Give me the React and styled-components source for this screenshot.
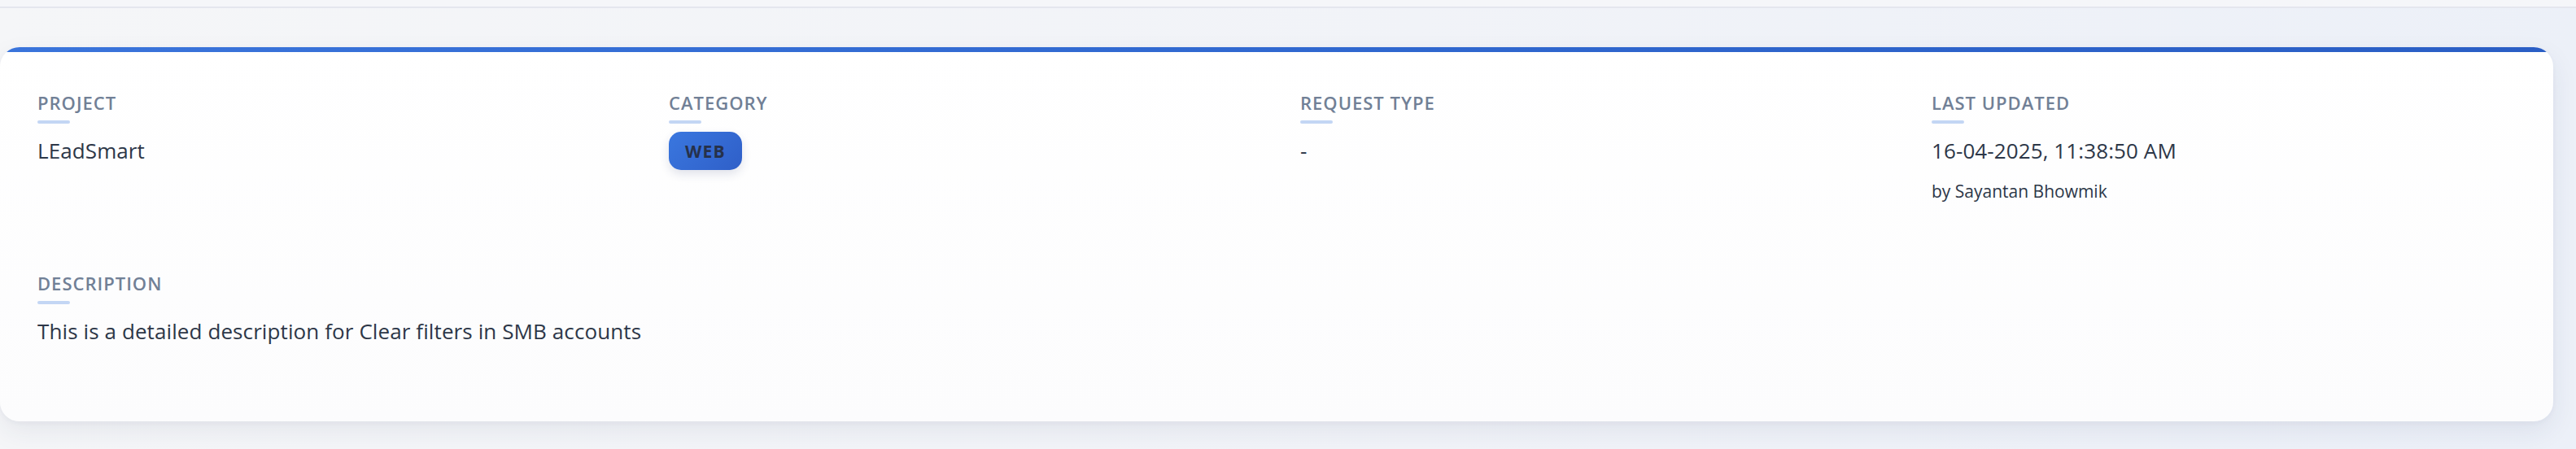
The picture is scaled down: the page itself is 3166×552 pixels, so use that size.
import React from "react";
import styled, { createGlobalStyle } from "styled-components";

const GlobalStyle = createGlobalStyle`
  html, body {
    margin: 0;
    padding: 0;
  }
  body {
    font-family: "Open Sans", "Noto Sans", sans-serif;
    background: #f3f4f8;
    -webkit-font-smoothing: antialiased;
  }
  * { box-sizing: border-box; }
`;

const Page = styled.div`
  min-height: 552px;
  background: linear-gradient(90deg, #f5f6f8 0%, #f1f3f8 55%, #ecf0f8 100%);
`;

const TopStrip = styled.div`
  height: 10px;
  background: #f5f6f9;
  border-bottom: 2px solid #e4e6ee;
`;

const Main = styled.main`
  padding: 48px 28px 34px 0;
`;

const Card = styled.section`
  overflow: hidden;
  border-radius: 24px;
  background: linear-gradient(180deg, #ffffff 0%, #fcfcfd 100%);
  box-shadow: 0 12px 32px rgba(40, 52, 90, 0.08), 0 2px 6px rgba(40, 52, 90, 0.04);
`;

const AccentBar = styled.div`
  height: 6px;
  background: linear-gradient(90deg, #3a74db 0%, #3068d0 50%, #2a5ec5 100%);
`;

const CardBody = styled.div`
  padding: 49px 46px 88px;
`;

const FieldGrid = styled.div`
  display: grid;
  grid-template-columns: repeat(4, 1fr);
  column-gap: 58px;
`;

const Field = styled.div`
  display: flex;
  flex-direction: column;
  align-items: flex-start;
  margin-top: ${(p) => p.$offset || 0}px;
`;

const Label = styled.div`
  font-size: 22px;
  line-height: 26px;
  font-weight: 600;
  letter-spacing: 1px;
  text-transform: uppercase;
  color: #718096;
`;

const Underline = styled.span`
  display: block;
  width: 40px;
  height: 4px;
  margin-top: 9px;
  border-radius: 2px;
  background: #c3d6f4;
`;

const Value = styled.div`
  margin-top: 10px;
  font-size: 26px;
  line-height: 46px;
  font-weight: 400;
  letter-spacing: 0.1px;
  color: #2d3748;
`;

const SubValue = styled.div`
  margin-top: 12px;
  font-size: 21px;
  line-height: 30px;
  color: #2d3748;
`;

const Badge = styled.span`
  margin-top: 10px;
  display: inline-flex;
  align-items: center;
  justify-content: center;
  height: 47px;
  padding: 0 20px;
  border-radius: 15px;
  background: linear-gradient(135deg, #3a77df 0%, #2f5fc8 100%);
  box-shadow: 0 5px 12px rgba(40, 60, 110, 0.14);
  font-size: 21px;
  font-weight: 700;
  letter-spacing: 1.2px;
  color: #26314a;
`;

const fields = [
  { label: "Project", value: "LEadSmart" },
  { label: "Category", badge: "WEB" },
  { label: "Request Type", value: "-" },
  { label: "Last Updated", value: "16-04-2025, 11:38:50 AM", sub: "by Sayantan Bhowmik" },
];

export default function App() {
  return (
    <Page>
      <GlobalStyle />
      <TopStrip />
      <Main>
        <Card>
          <AccentBar />
          <CardBody>
            <FieldGrid>
              {fields.map((f) => (
                <Field key={f.label}>
                  <Label>{f.label}</Label>
                  <Underline />
                  {f.badge ? <Badge>{f.badge}</Badge> : <Value>{f.value}</Value>}
                  {f.sub && <SubValue>{f.sub}</SubValue>}
                </Field>
              ))}
            </FieldGrid>
            <Field $offset={85}>
              <Label>Description</Label>
              <Underline />
              <Value>This is a detailed description for Clear filters in SMB accounts</Value>
            </Field>
          </CardBody>
        </Card>
      </Main>
    </Page>
  );
}
